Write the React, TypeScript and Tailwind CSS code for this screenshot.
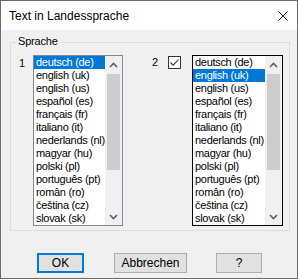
import React from "react";

const languages = [
  "deutsch (de)",
  "english (uk)",
  "english (us)",
  "español (es)",
  "français (fr)",
  "italiano (it)",
  "nederlands (nl)",
  "magyar (hu)",
  "polski (pl)",
  "português (pt)",
  "român (ro)",
  "čeština (cz)",
  "slovak (sk)",
];

function Chevron({ up }: { up?: boolean }) {
  return (
    <svg width="9" height="6" viewBox="0 0 9 6">
      <polyline
        points={up ? "1,5 4.5,1.5 8,5" : "1,1 4.5,4.5 8,1"}
        fill="none"
        stroke="#606060"
        strokeWidth="1.6"
      />
    </svg>
  );
}

function LanguageList({
  selected,
  className,
}: {
  selected: number;
  className: string;
}) {
  return (
    <div className={`flex h-[171px] border bg-white ${className}`}>
      <ul className="flex-1 overflow-hidden tracking-[-0.3px]">
        {languages.map((lang, i) => (
          <li
            key={lang}
            className={`h-[13px] whitespace-nowrap pl-[2px] leading-[13px] ${
              i === selected ? "bg-[#0078d7] text-white" : "text-black"
            }`}
          >
            {lang}
          </li>
        ))}
      </ul>
      {/* scrollbar */}
      <div className="flex w-[17px] flex-col bg-[#f0f0f0]">
        <div className="flex h-[17px] items-center justify-center">
          <Chevron up />
        </div>
        <div className="mx-[2px] mt-[1px] h-[96px] bg-[#cdcdcd]" />
        <div className="flex-1" />
        <div className="flex h-[17px] items-center justify-center">
          <Chevron />
        </div>
      </div>
    </div>
  );
}

export default function App() {
  return (
    <div className="min-h-screen bg-white font-['Liberation_Sans',Arial,sans-serif] text-[11px] text-black">
      <div className="flex h-[279px] w-[298px] flex-col border border-[#6b6b6b] bg-[#f0f0f0]">
        {/* Title bar */}
        <div className="flex h-[29px] items-center justify-between bg-white pl-[8px] pr-[9px] text-[12px]">
          <span>Text in Landessprache</span>
          <svg width="10" height="10" viewBox="0 0 10 10">
            <path d="M0.5 0.5 L9.5 9.5 M9.5 0.5 L0.5 9.5" stroke="#1a1a1a" strokeWidth="1" />
          </svg>
        </div>

        {/* Body */}
        <div className="flex-1 pl-[9px] pt-[12px]">
          <div className="relative h-[189px] w-[280px] border border-[#dcdcdc]">
            <span className="absolute -top-[8px] left-[5px] bg-[#f0f0f0] px-[2px] leading-[13px] tracking-[-0.2px]">
              Sprache
            </span>
            <div className="flex items-start pt-[12px]">
              <span className="ml-[8px] w-[14px] pt-[2px] leading-[13px]">1</span>
              <LanguageList selected={0} className="w-[90px] border-[#828790]" />
              <span className="ml-[29px] w-[16px] pt-[1px] leading-[13px]">2</span>
              <div className="mt-[1px] flex h-[13px] w-[13px] items-center justify-center border border-[#333333] bg-white">
                <svg width="11" height="11" viewBox="0 0 11 11">
                  <polyline points="1.5,5.5 4.2,8.2 9.5,2.5" fill="none" stroke="#333333" strokeWidth="1.1" />
                </svg>
              </div>
              <LanguageList selected={1} className="ml-[11px] w-[91px] border-black" />
            </div>
          </div>

          {/* Buttons */}
          <div className="ml-[27px] mt-[22px] flex text-[12px]">
            <button className="flex h-[20px] w-[47px] items-center justify-center border-2 border-[#0078d7] bg-[#e1e1e1]">
              OK
            </button>
            <button className="ml-[30px] flex h-[20px] w-[73px] items-center justify-center border border-[#adadad] bg-[#e1e1e1]">
              Abbrechen
            </button>
            <button className="ml-[29px] flex h-[20px] w-[46px] items-center justify-center border border-[#adadad] bg-[#e1e1e1]">
              ?
            </button>
          </div>
        </div>
      </div>
    </div>
  );
}
